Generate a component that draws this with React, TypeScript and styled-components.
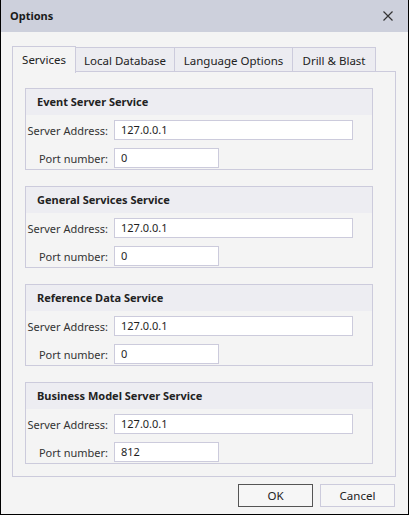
import React from "react";
import styled, { createGlobalStyle } from "styled-components";

const Global = createGlobalStyle`
  html, body { margin: 0; padding: 0; background: #f4f4f4; }
  body { font-family: "Noto Sans", "Open Sans", sans-serif; font-size: 11px; color: #1e1e1e; }
  * { box-sizing: border-box; }
`;

const Window = styled.div`
  width: 409px;
  height: 515px;
  border: 1px solid #000;
  border-top: none;
  background: #f4f4f4;
  display: flex;
  flex-direction: column;
`;

const TitleBar = styled.div`
  height: 32px;
  background: #cdd0dc;
  display: flex;
  align-items: center;
  justify-content: space-between;
  padding: 0 14px 1px 9px;
`;

const Title = styled.span`
  font-weight: 700;
  font-size: 11px;
  color: #1a1a1a;
`;

const CloseButton = styled.button`
  border: none;
  background: transparent;
  padding: 0;
  width: 12px;
  height: 12px;
  display: flex;
  align-items: center;
  justify-content: center;
`;

const Body = styled.div`
  flex: 1;
  display: flex;
  flex-direction: column;
  padding: 13px 12px 7px 11px;
`;

const TabStrip = styled.div`
  display: flex;
  align-items: flex-end;
  height: 27px;
  position: relative;
  z-index: 1;
`;

const Tab = styled.div<{ $active?: boolean; $w: number }>`
  width: ${(p) => p.$w}px;
  height: ${(p) => (p.$active ? 27 : 25)}px;
  margin-bottom: ${(p) => (p.$active ? -1 : 0)}px;
  display: flex;
  align-items: center;
  justify-content: center;
  padding-top: ${(p) => (p.$active ? 0 : 1)}px;
  padding-bottom: ${(p) => (p.$active ? 1 : 0)}px;
  background: ${(p) => (p.$active ? "#f4f4f4" : "#ececf1")};
  border: 1px solid #cccbdc;
  border-bottom: ${(p) => (p.$active ? "none" : "1px solid #cccbdc")};
  margin-left: ${(p) => (p.$active ? 0 : -1)}px;
  color: #222;
  font-size: 11.5px;
  &:first-child { margin-left: 0; }
`;

const Panel = styled.div`
  flex: 1;
  border: 1px solid #cccbdc;
  margin-top: -1px;
  width: 384px;
  padding: 16px 22px 0 12px;
  display: flex;
  flex-direction: column;
  gap: 16px;
`;

const Group = styled.div`
  height: 82px;
  border: 1px solid #cccbdc;
  display: flex;
  flex-direction: column;
`;

const GroupHeader = styled.div`
  height: 26px;
  background: #ededf2;
  padding: 0 0 1px 11px;
  display: flex;
  align-items: center;
  font-weight: 700;
  font-size: 11px;
  color: #222;
`;

const FieldGrid = styled.div`
  display: grid;
  grid-template-columns: 88px 1fr;
  row-gap: 8px;
  padding: 5px 19px 0 0;
  align-items: center;
`;

const Label = styled.label`
  text-align: right;
  padding-right: 6px;
  color: #333;
  font-size: 11px;
  white-space: nowrap;
`;

const Input = styled.input<{ $w?: number }>`
  height: 20px;
  width: ${(p) => (p.$w ? `${p.$w}px` : "100%")};
  border: 1px solid #cccbdc;
  background: #fff;
  padding: 0 0 1px 6px;
  font-family: inherit;
  font-size: 11px;
  color: #1e1e1e;
  outline: none;
`;

const Footer = styled.div`
  display: flex;
  justify-content: flex-end;
  gap: 7px;
  padding-top: 7px;
  padding-right: 1px;
`;

const Button = styled.button<{ $default?: boolean }>`
  width: 75px;
  height: 23px;
  border: 1px solid ${(p) => (p.$default ? "#555" : "#cccbdc")};
  background: #f6f6f6;
  font-family: inherit;
  font-size: 11.5px;
  color: #222;
  padding: 0 0 1px;
`;

const services = [
  { name: "Event Server Service", address: "127.0.0.1", port: "0" },
  { name: "General Services Service", address: "127.0.0.1", port: "0" },
  { name: "Reference Data Service", address: "127.0.0.1", port: "0" },
  { name: "Business Model Server Service", address: "127.0.0.1", port: "812" },
];

const tabs = [
  { label: "Services", w: 64 },
  { label: "Local Database", w: 100 },
  { label: "Language Options", w: 119 },
  { label: "Drill & Blast", w: 84 },
];

export default function App() {
  return (
    <>
      <Global />
      <Window>
        <TitleBar>
          <Title>Options</Title>
          <CloseButton aria-label="Close">
            <svg width="10" height="10" viewBox="0 0 10 10">
              <path d="M0.5 0.5 L9.5 9.5 M9.5 0.5 L0.5 9.5" stroke="#333" strokeWidth="1.2" fill="none" />
            </svg>
          </CloseButton>
        </TitleBar>
        <Body>
          <TabStrip>
            {tabs.map((t, i) => (
              <Tab key={t.label} $active={i === 0} $w={t.w}>
                {t.label}
              </Tab>
            ))}
          </TabStrip>
          <Panel>
            {services.map((s) => (
              <Group key={s.name}>
                <GroupHeader>{s.name}</GroupHeader>
                <FieldGrid>
                  <Label>Server Address:</Label>
                  <Input defaultValue={s.address} />
                  <Label>Port number:</Label>
                  <Input $w={105} defaultValue={s.port} />
                </FieldGrid>
              </Group>
            ))}
          </Panel>
          <Footer>
            <Button $default>OK</Button>
            <Button>Cancel</Button>
          </Footer>
        </Body>
      </Window>
    </>
  );
}
